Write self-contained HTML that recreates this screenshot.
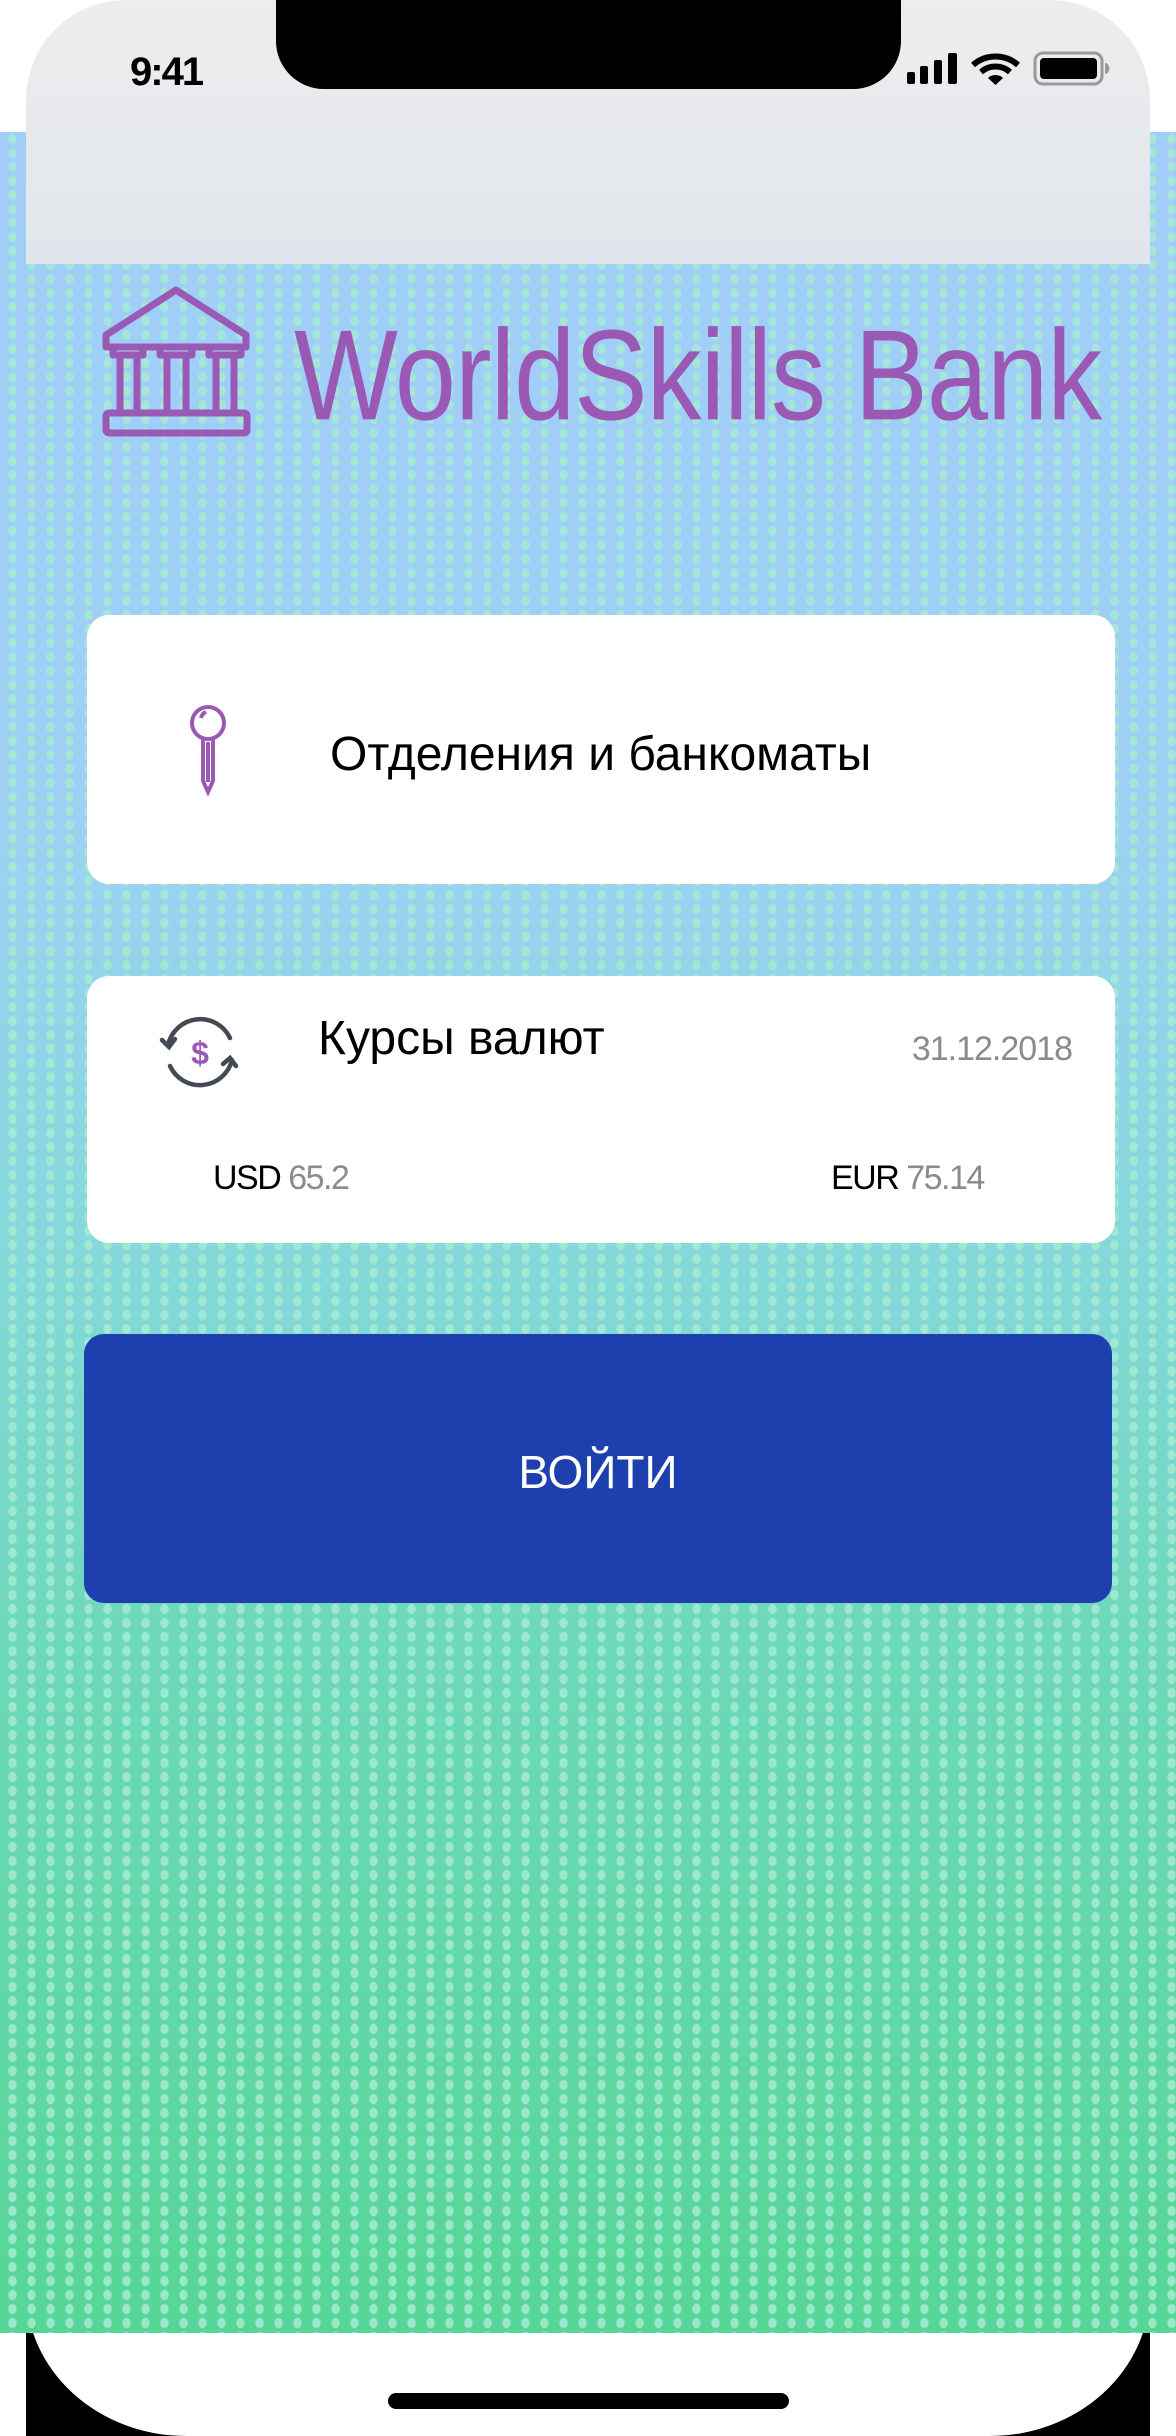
<!DOCTYPE html>
<html><head><meta charset="utf-8"><style>
*{margin:0;padding:0;box-sizing:border-box}
body{width:1176px;height:2436px;background:#fff;position:relative;overflow:hidden;font-family:"Liberation Sans",sans-serif}
.abs{position:absolute}
#bg{left:0;top:132px;width:1176px;height:2201px;
background-image:radial-gradient(ellipse 4.5px 5.5px at 50% 50%,rgba(165,235,210,0.85) 85%,rgba(165,235,210,0) 100%),linear-gradient(180deg,#a1cdf8 0%,#9fd0f4 30%,#86d8dc 50%,#6cd8b8 70%,#56d696 100%);
background-size:19px 14px,100% 100%;background-position:3px 0,0 0}
#hdr{left:26px;top:0;width:1124px;height:264px;border-radius:100px 100px 0 0;background:linear-gradient(180deg,#ededed,#e1e6ec)}
#notch{left:276px;top:0;width:625px;height:89px;background:#000;border-radius:0 0 48px 48px}
.card{background:#fff;border-radius:22px;left:87px;width:1028px}
.t{white-space:nowrap;position:absolute}
</style></head><body>
<div class="abs" style="left:26px;top:2287px;width:1124px;height:149px;background:#000"></div>
<div class="abs" style="left:26px;top:2250px;width:1124px;height:186px;background:#fff;border-radius:0 0 160px 160px / 0 0 146px 146px"></div>
<div id="bg" class="abs"></div>
<div id="hdr" class="abs"></div>
<div id="notch" class="abs"></div>
<div class="t" style="left:130px;top:50px;font-size:40px;font-weight:bold;letter-spacing:-2px;color:#000">9:41</div>
<svg class="abs" style="left:905px;top:50px" width="210" height="40" viewBox="905 50 210 40">
<rect x="907" y="72" width="8" height="12" rx="2"/><rect x="920" y="66" width="8" height="18" rx="2"/><rect x="934" y="60" width="8" height="24" rx="2"/><rect x="948" y="53" width="9" height="31" rx="2"/>
<path d="M973 65 A34 34 0 0 1 1018 65" fill="none" stroke="#000" stroke-width="6"/>
<path d="M981 72 A22 22 0 0 1 1010 72" fill="none" stroke="#000" stroke-width="6"/>
<path d="M988 78 L995.5 85 L1003 78 A11 11 0 0 0 988 78Z"/>
<rect x="1035" y="53" width="67" height="31" rx="8" fill="none" stroke="#999" stroke-width="3"/>
<rect x="1040" y="58" width="57" height="21" rx="4"/>
<path d="M1105 63 a4 5 0 0 1 0 11z" fill="#999"/>
</svg>
<svg class="abs" style="left:100px;top:285px" width="154" height="152" viewBox="0 0 154 152">
<g fill="none" stroke="#9b59b6" stroke-width="7" stroke-linejoin="round">
<path d="M76 5 L6 50 L6 62 L146 62 L146 50 Z"/>
<rect x="6" y="128" width="141" height="20" rx="3"/>
<path d="M13 62v8h30v-8M60 62v8h32v-8M109 62v8h32v-8"/>
<path d="M20 70v58M37 70v58M67 70v58M86 70v58M116 70v58M134 70v58"/>
</g></svg>
<div class="t" style="left:294px;top:312px;font-size:110px;color:#9b59b6;transform:scaleY(1.17);transform-origin:0 50%;letter-spacing:-1px">WorldSkills Bank</div>
<div class="abs card" style="top:615px;height:269px"></div>
<svg class="abs" style="left:186px;top:702px" width="46" height="94" viewBox="0 0 46 94">
<g fill="none" stroke="#9b59b6" stroke-width="4"><circle cx="22" cy="21" r="16"/><path d="M15 16a8 8 0 0 1 5-6"/><path d="M17 37v42l5 11l5-11v-42M22 40v40"/></g></svg>
<div class="t" style="left:330px;top:727px;font-size:48px;color:#000">Отделения и банкоматы</div>
<div class="abs card" style="top:976px;height:267px"></div>
<svg class="abs" style="left:158px;top:1010px" width="84" height="84" viewBox="0 0 84 84">
<g fill="none" stroke="#444a55" stroke-width="4.5" stroke-linecap="round"><path d="M10 35 A33 33 0 0 1 72 28"/><path d="M74 50 A33 33 0 0 1 12 56"/><path d="M4 30 l7 7 l6-8"/><path d="M78 56 l-6-8 l-7 6"/></g>
<text x="42" y="54" text-anchor="middle" font-size="32" font-weight="bold" fill="#9b59b6" font-family="Liberation Sans">$</text></svg>
<div class="t" style="left:318px;top:1011px;font-size:48px;color:#000">Курсы валют</div>
<div class="t" style="right:104px;top:1030px;font-size:34px;color:#8b8b8b;letter-spacing:-1px">31.12.2018</div>
<div class="t" style="left:213px;top:1159px;font-size:34px;color:#000;letter-spacing:-1.5px">USD <span style="color:#8b8b8b">65.2</span></div>
<div class="t" style="left:831px;top:1159px;font-size:34px;color:#000;letter-spacing:-1.5px">EUR <span style="color:#8b8b8b">75.14</span></div>
<div class="abs" style="left:84px;top:1334px;width:1028px;height:269px;background:#1e40ae;border-radius:20px"></div>
<div class="t" style="left:84px;width:1028px;text-align:center;top:1445px;font-size:46px;color:#fff">ВОЙТИ</div>
<div class="abs" style="left:388px;top:2393px;width:401px;height:16px;background:#000;border-radius:8px"></div>
</body></html>
